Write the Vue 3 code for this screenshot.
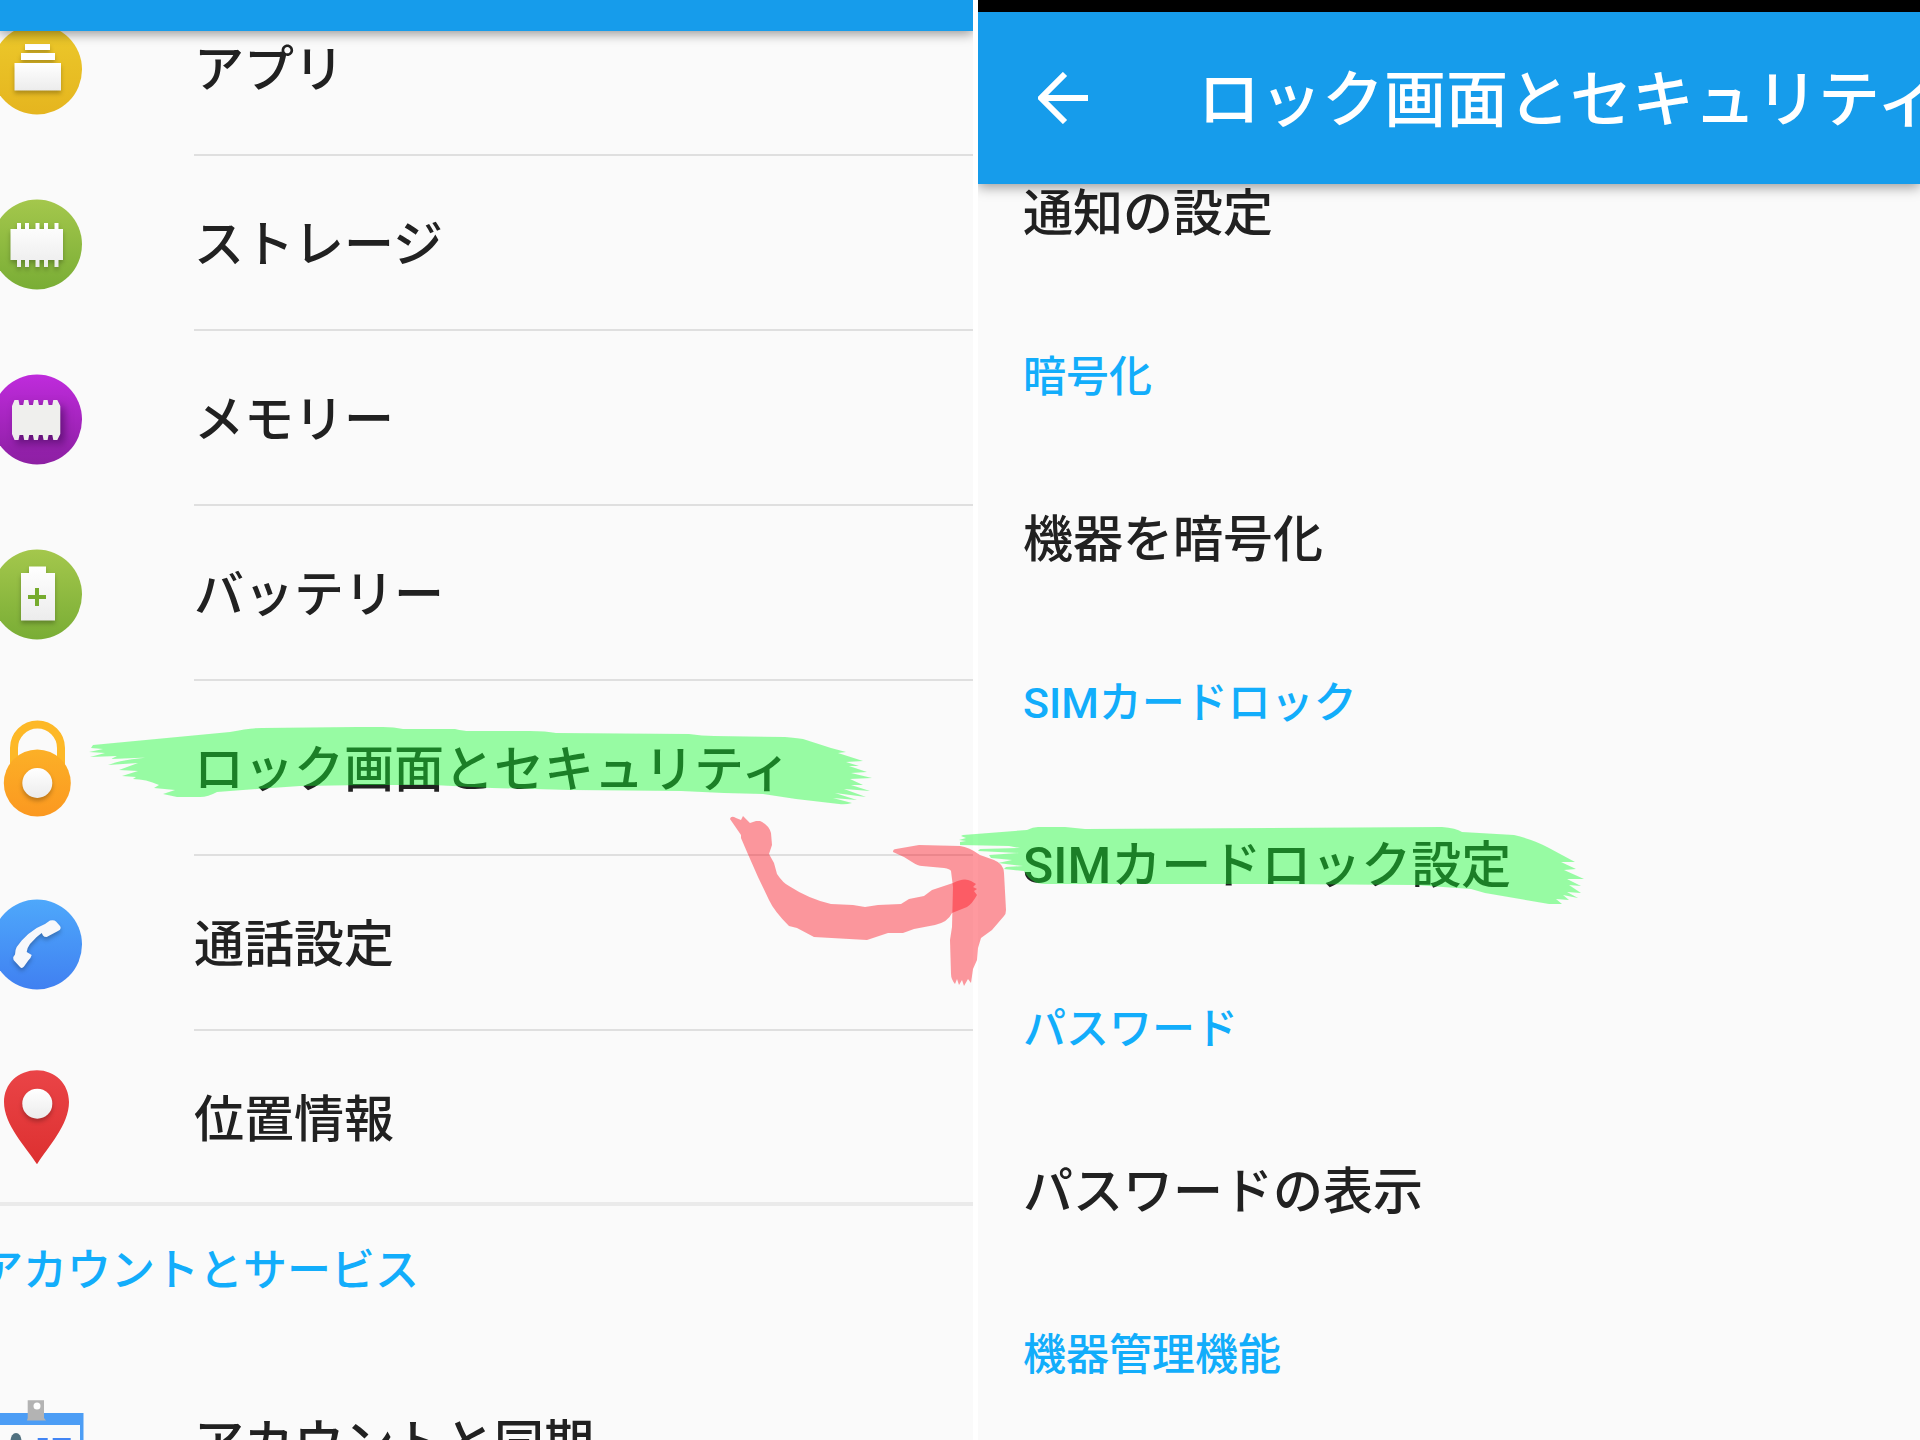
<template>
    <main class="page">
        <section class="panel settings" aria-label="設定">
            <div class="topbar"></div>
            <nav class="list">
                <template v-for="item in items" :key="item.icon">
                    <h2 v-if="item.heading" class="heading">{{ item.heading }}</h2>
                    <a class="row" :class="{ last: item.last }" href="#">
                        <svg class="icon" viewBox="0 0 84 104" aria-hidden="true">
                            <defs>
                                <linearGradient :id="'bg-' + item.icon" x1="0" y1="0" x2="0" y2="1">
                                    <stop offset="0" :stop-color="item.from" />
                                    <stop offset="1" :stop-color="item.to" />
                                </linearGradient>
                                <linearGradient :id="'fg-' + item.icon" x1="0" y1="0" x2="0" y2="1">
                                    <stop offset="0" stop-color="#ffffff" />
                                    <stop offset="1" stop-color="#ececec" />
                                </linearGradient>
                            </defs>
                            <circle v-if="item.round" cx="37" cy="52.500" r="45" :fill="`url(#bg-${item.icon})`" />

                            <g v-if="item.icon === 'apps'" class="raised">
                                <path d="M25 27h25v6H25zM21 36h34v7H21z" fill="#fff" />
                                <path d="M14.500 46h46.500v27.500h-46.500z" fill="url(#fg-apps)" />
                            </g>
                            <path
                                v-else-if="item.icon === 'storage'"
                                class="raised"
                                fill="url(#fg-storage)"
                                d="M10.500 37H17v-6h4v6h4v-6h4v6h6.500v-6h4v6H44v-6h4v6h6.500v-6h4v6H63v31h-4.500v7h-4v-7H48v7h-4v-7h-4.500v7h-4v-7H29v7h-4v-7h-4v7h-4v-7h-6.500z"
                            />
                            <path
                                v-else-if="item.icon === 'memory'"
                                class="raised deep"
                                fill="#efefed"
                                d="M12 39l2.500-6h4l1 5h3.700l1-5h4l1 5h3.700l1-5h4l1 5h3.700l1-5h4l1 5h3.700l1-5h4l3 6v28l-3 6h-4l-1-5h-3.700l-1 5h-4l-1-5h-3.700l-1 5h-4l-1-5h-3.700l-1 5h-4l-1-5h-3.700l-1 5h-4l-2.500-6z"
                            />
                            <g v-else-if="item.icon === 'battery'">
                                <path class="raised" d="M21 31h8v-6.500h17V31h9v47.500H21z" fill="url(#fg-battery)" />
                                <path d="M37 46v18M28 55h18" stroke="#76ab2e" stroke-width="4" />
                            </g>
                            <g v-else-if="item.icon === 'lock'">
                                <path d="M14 54V31a23.500 23.500 0 0 1 47 0v23" fill="none" stroke="#fdb827" stroke-width="8" />
                                <circle cx="37.300" cy="66" r="33.500" fill="url(#bg-lock)" />
                                <circle class="raised" cx="37.300" cy="66" r="15" fill="url(#fg-lock)" />
                            </g>
                            <path
                                v-else-if="item.icon === 'phone'"
                                class="raised"
                                fill="#f7f8fb"
                                d="M50 28.500Q54 27.500 56 29.500L60 34Q62 37 58 39L46.700 45Q44 45 43 43.500L41.700 41 36.700 45 30 52Q27 56 26.700 60L31.700 63Q31 66 28.300 68.500L24 74.500Q22 77 20 75L14 68.500Q13 67 13.300 65L15 62.500Q15 58 16.700 55L21.700 48.500 28.300 42 36.700 36 45 32z"
                            />
                            <g v-else-if="item.icon === 'location'">
                                <path d="M37 3.300C55 3.300 69 17 69 35 69 58 48 80 37 97.300 26 80 4 58 4 35 4 17 18 3.300 37 3.300z" fill="url(#bg-location)" />
                                <circle class="raised" cx="37.300" cy="36.700" r="15" fill="url(#fg-location)" />
                            </g>
                            <g v-else-if="item.icon === 'account'">
                                <path d="M0 22h83.500v82H0z" fill="#4c9df5" />
                                <path d="M0 34h80v70H0z" fill="#fafafa" />
                                <path d="M27.700 9.300H44V27l2 2.500H27l.700-2.500z" fill="#b3b3b3" />
                                <circle cx="37" cy="15" r="3.500" fill="#fff" />
                                <ellipse cx="16" cy="50" rx="5.500" ry="8" fill="#50707f" />
                                <path d="M37.700 49h10M52.700 49h18" stroke="#4285f4" stroke-width="4" />
                            </g>
                        </svg>
                        <span class="label">{{ item.label }}</span>
                    </a>
                </template>
            </nav>
        </section>

        <section class="panel security" aria-label="ロック画面とセキュリティ">
            <div class="statusbar"></div>
            <header class="topbar">
                <button class="back" type="button" aria-label="戻る">
                    <svg viewBox="0 0 52 52" aria-hidden="true">
                        <path d="M50 26H5M27 2L3 26l24 24" fill="none" stroke="#fff" stroke-width="6" />
                    </svg>
                </button>
                <h1>ロック画面とセキュリティ</h1>
            </header>
            <nav class="list">
                <template v-for="entry in entries" :key="entry.text">
                    <h2 v-if="entry.heading" class="heading">
                        {{ entry.text }}
                    </h2>
                    <a v-else class="row" href="#">{{ entry.text }}</a>
                </template>
            </nav>
        </section>

        <!-- マーカーと矢印 -->
        <svg class="marks" viewBox="0 0 1920 1440" preserveAspectRatio="none" aria-hidden="true">
            <path class="green" :d="markerLeft" />
            <path class="green" :d="markerRight" />
            <path class="red" :d="arrowStem" />
            <path class="red" :d="arrowHead" />
        </svg>
    </main>
</template>

<script setup>
const items = [
    { icon: 'apps', label: 'アプリ', round: true, from: '#ecc92b', to: '#e5b51f' },
    { icon: 'storage', label: 'ストレージ', round: true, from: '#a4c74c', to: '#79ad35' },
    { icon: 'memory', label: 'メモリー', round: true, from: '#bf2bdc', to: '#8c1fa2' },
    { icon: 'battery', label: 'バッテリー', round: true, from: '#a4c74c', to: '#79ad35' },
    { icon: 'lock', label: 'ロック画面とセキュリティ', from: '#fcb027', to: '#fb9820' },
    { icon: 'phone', label: '通話設定', round: true, from: '#4ea8fb', to: '#4080f1' },
    { icon: 'location', label: '位置情報', last: true, from: '#ea4447', to: '#dd3030' },
    { icon: 'account', label: 'アカウントと同期', heading: 'アカウントとサービス' },
];

const entries = [
    { text: '通知の設定' },
    { text: '暗号化', heading: true },
    { text: '機器を暗号化' },
    { text: 'SIMカードロック', heading: true },
    { text: 'SIMカードロック設定' },
    { text: 'パスワード', heading: true },
    { text: 'パスワードの表示' },
    { text: '機器管理機能', heading: true },
];

const markerLeft =
    'M93 745L230 732Q250 728 262 728L357 727H383Q394 727 403 729H455Q464 731 469 731H530Q546 731 556 733' +
    'L689 734Q702 736 714 736L785 737Q796 738 803 739L831 748 846 752 838 753 863 761 846 762 859 766 849 766' +
    ' 867 772 851 773 872 778 850 779 863 785 851 785 870 791 844 789 866 797 835 793 857 800 833 798 852 803' +
    'Q845 805 839 804L796 799 763 794 724 793 681 791 571 790 535 789 492 788 433 785H365L300 786 257 789' +
    ' 217 792Q208 797 200 797H177L163 794 175 790 154 788 159 785Q146 779 133 779L136 777 122 776 138 771' +
    ' 119 770 138 763 108 765Q126 758 160 757L111 759 117 756 90 757 105 753 89 752 103 749 91 748z';

const markerRight =
    'M963 835L1027 830Q1033 827 1038 827H1065L1085 829 1442 827Q1456 828 1462 832L1514 835Q1535 840 1549 848' +
    'L1575 862 1561 862 1576 869 1564 870 1584 879 1567 879 1581 886 1569 885 1581 893 1567 892 1578 898' +
    ' 1563 895 1569 900 1556 899 1562 904H1549L1485 893 1471 889 1415 885 1277 884H1045Q1031 884 1024 871' +
    'L1004 869 1006 867 1023 866 998 863 1012 860 991 858 989 855 1019 853 978 851 980 849 1020 848 1009 846' +
    ' 960 845V842L966 841 959 840 966 838 961 836z';

const arrowStem =
    'M730 819Q731 815 736 818L741 820 743 816 750 823 756 821 760 821Q769 825 771 833L772 845 769 854 774 863' +
    ' 777 874Q783 883 789 886 809 899 831 904L853 905 865 907 878 905 901 904 909 899 924 896 932 890 953 883' +
    'Q964 877 971 881L976 884 973 887 977 889 974 891 977 895Q972 904 967 907L952 913Q948 922 935 925L914 929' +
    ' 903 933H888L867 940 814 937 797 928 789 926Q774 911 769 900L758 877 747 852 741 838 741 835z';

const arrowHead =
    'M893 852Q893 849 896 849L919 845 960 846Q969 847 980 855L994 860Q1004 864 1004 873L1006 910Q1006 914 1004 916' +
    'L992 930 981 938 978 948 977 960 973 969 971 983 968 979 964 986 962 980 959 985 957 979 955 984Q951 979 951 974' +
    'L950 940 952 927 953 887 951 871Q950 869 944 868L922 866Q918 866 912 862L904 857z';
</script>

<style>
body {
    margin: 0;
    background: #ffffff;
}
</style>

<style scoped>
.page {
    position: relative;
    display: grid;
    grid-template-columns: minmax(0, 973fr) minmax(0, 942fr);
    gap: 5px;
    height: 100vh;
    overflow: hidden;
    font-family: Roboto, "Noto Sans CJK JP", sans-serif;
    font-weight: 500;
    color: #212121;
}

.panel {
    display: flex;
    flex-direction: column;
    min-height: 0;
    overflow: hidden;
    background: #fafafa;
}

.topbar {
    position: relative;   /* 影をリストの上に重ねる */
    z-index: 1;
    flex: none;
    display: flex;
    align-items: center;
    background: #169ceb;
    box-shadow: 0 3px 12px rgba(0, 0, 0, 0.4);
}

h1,
h2 {
    margin: 0;
    font-weight: 500;
    white-space: nowrap;
}

.heading {
    display: flex;
    align-items: center;
    box-sizing: border-box;
    color: #12adfb;
}

.row {
    display: flex;
    align-items: center;
    box-sizing: border-box;
    color: inherit;
    font-size: 50px;
    text-decoration: none;
    white-space: nowrap;
}

/* 左：設定一覧 */
.settings .topbar {
    height: 31px;
}

.settings .list {
    margin-top: -50px;    /* スクロール途中の位置 */
}

.settings .row {
    height: 175px;
}

.settings .heading {
    height: 149px;
    padding-bottom: 28px;
    margin-left: -21px;
    font-size: 44px;
}

.icon {
    flex: none;
    width: 84px;
    height: 104px;
    margin-right: 110px;
}

.raised {
    filter: drop-shadow(0 3px 2px rgba(0, 0, 0, 0.25));
}

.deep {
    filter: drop-shadow(4px 5px 4px rgba(40, 0, 60, 0.5));
}

.label {
    flex: 1;
    display: flex;
    align-items: center;
    box-sizing: border-box;
    height: 100%;
    padding-bottom: 6px;
    border-bottom: 2px solid #dfdfdf;
}

.row.last {
    box-shadow: inset 0 -4px 0 #eaeaea;
}

.row.last .label {
    border-bottom-color: transparent;
}

/* 右：ロック画面とセキュリティ */
.statusbar {
    flex: none;
    height: 12px;
    background: #000000;
}

.security .topbar {
    height: 172px;
}

.back {
    flex: none;
    width: 52px;
    height: 52px;
    margin: 0 108px 0 60px;
    padding: 0;
    border: none;
    background: transparent;
    cursor: pointer;
}

.back svg {
    display: block;
    width: 100%;
    height: 100%;
}

h1 {
    padding-bottom: 6px;
    color: #ffffff;
    font-size: 62px;
}

.security .list {
    margin-top: -54px;
    padding-left: 45px;
}

.security .row,
.security .heading {
    height: 163px;
}

.security .row {
    padding-bottom: 6px;
}

.security .heading {
    padding-bottom: 4px;
    font-size: 43px;
}

.marks {
    position: absolute;
    inset: 0;
    width: 100%;
    height: 100%;
    z-index: 2;
    pointer-events: none;
}

.green {
    fill: rgba(20, 253, 48, 0.43);
}

.red {
    fill: rgba(252, 12, 26, 0.42);
}
</style>
